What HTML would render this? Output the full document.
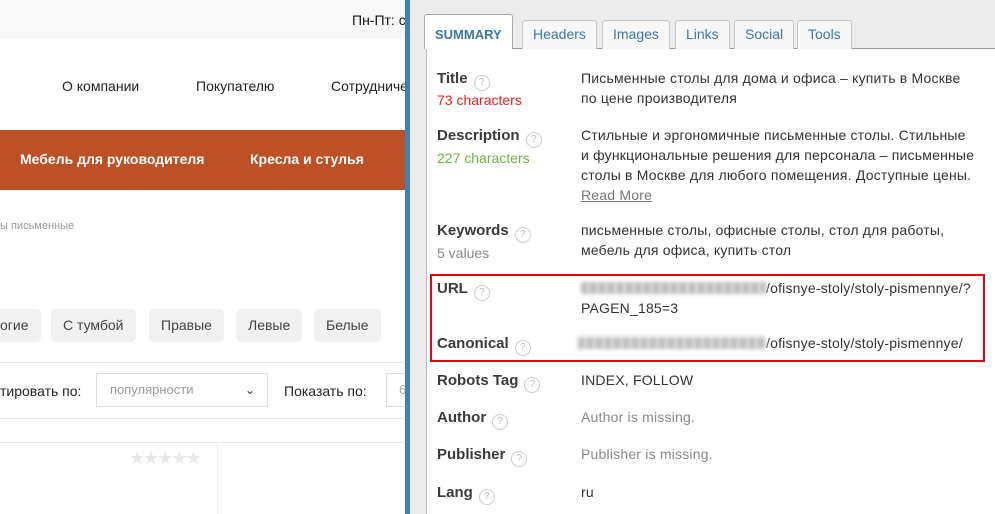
<!DOCTYPE html>
<html><head><meta charset="utf-8"><style>
*{margin:0;padding:0;box-sizing:border-box}
body{width:995px;height:514px;overflow:hidden;position:relative;background:#fff;font-family:"Liberation Sans",sans-serif}
.a{position:absolute;white-space:nowrap}
.left{position:absolute;left:0;top:0;width:405px;height:514px;overflow:hidden}
.top{left:0;top:0;width:405px;height:39px;background:#f8f8f8}
.nav{font-size:14px;color:#222;top:78px}
.org{left:0;top:130px;width:405px;height:60px;background:#bd5026}
.orgt{color:#fff;font-size:14px;font-weight:bold;top:151px}
.chip{top:309px;height:33px;background:#f1f1f1;border-radius:5px;font-size:14px;color:#444;line-height:33px;padding:0 12px}
.line{height:1px;background:#e6e6e6}
.bar{left:405px;top:0;width:5px;height:514px;background:#3b84ad}
.gp{left:410px;top:0;width:585px;height:514px;background:#ececec}
.wc{left:426px;top:48px;width:569px;height:466px;background:#fff;border-left:1px solid #bbb;border-top:1px solid #999}
.tab{top:20px;height:29px;border:1px solid #c6c6c6;border-bottom:none;background:#f7f7f7;color:#3b7aa0;font-size:14px;line-height:27px;padding:0 10px;border-radius:3px 3px 0 0}
.lab{left:437px;font-size:15px;font-weight:bold;color:#3a3a3a}
.q{display:inline-block;width:16px;height:16px;border:1px solid #ccc;border-radius:50%;color:#bbb;font-size:10px;line-height:14px;text-align:center;font-weight:normal;vertical-align:-2px;margin-left:6px}
.sub{left:437px;font-size:14px}
.val{left:581px;font-size:14px;color:#333;line-height:20px;letter-spacing:0.2px}
.blur{display:inline-block;width:185px;height:12px;background:repeating-linear-gradient(90deg,#bbb 0 6px,#ddd 6px 9px);filter:blur(2px);vertical-align:-1px}
</style></head><body>
<div class="left">
<div class="a top"></div>
<div class="a" style="left:352px;top:12px;font-size:14px;color:#111">Пн-Пт: с</div>
<div class="a nav" style="left:62px">О компании</div>
<div class="a nav" style="left:196px">Покупателю</div>
<div class="a nav" style="left:331px">Сотрудничество</div>
<div class="a org"></div>
<div class="a orgt" style="left:20px">Мебель для руководителя</div>
<div class="a orgt" style="left:250px">Кресла и стулья</div>
<div class="a" style="left:0;top:220px;font-size:11px;color:#999">ы письменные</div>
<div class="a chip" style="left:-20px;width:61px;padding-left:20px">огие</div>
<div class="a chip" style="left:51px">С тумбой</div>
<div class="a chip" style="left:149px">Правые</div>
<div class="a chip" style="left:236px">Левые</div>
<div class="a chip" style="left:314px">Белые</div>
<div class="a line" style="left:0;top:362px;width:405px"></div>
<div class="a" style="left:0;top:383px;font-size:14px;color:#222">тировать по:</div>
<div class="a" style="left:96px;top:373px;width:172px;height:34px;border:1px solid #ddd;font-size:13px;color:#999;line-height:32px;padding-left:13px">популярности<span style="position:absolute;right:12px;color:#333;font-size:12px">&#8964;</span></div>
<div class="a" style="left:284px;top:383px;font-size:14px;color:#222">Показать по:</div>
<div class="a" style="left:386px;top:373px;width:30px;height:34px;border:1px solid #ddd;font-size:13px;color:#aaa;line-height:32px;padding-left:12px">6</div>
<div class="a line" style="left:0;top:418px;width:405px"></div>
<div class="a line" style="left:0;top:442px;width:405px"></div>
<div class="a" style="left:217px;top:442px;width:1px;height:72px;background:#eee"></div>
<div class="a" style="left:129px;top:448px;font-size:18px;color:#e8e8e8;letter-spacing:-2px">★★★★★</div>
</div>
<div class="a bar"></div>
<div class="a gp"></div>
<div class="a wc"></div>
<div class="a tab" style="left:424px;top:14px;height:35px;background:#fff;color:#3b7aa0;font-weight:bold;font-size:13px;line-height:40px;border-color:#aaa;z-index:2">SUMMARY</div>
<div class="a tab" style="left:522px">Headers</div>
<div class="a tab" style="left:602px">Images</div>
<div class="a tab" style="left:675px">Links</div>
<div class="a tab" style="left:734px">Social</div>
<div class="a tab" style="left:797px">Tools</div>
<div class="a lab" style="top:70px">Title<span class="q">?</span></div>
<div class="a sub" style="top:92px;color:#e8201f">73 characters</div>
<div class="a val" style="top:68px">Письменные столы для дома и офиса – купить в Москве<br>по цене производителя</div>
<div class="a lab" style="top:127px">Description<span class="q">?</span></div>
<div class="a sub" style="top:150px;color:#6cb33f">227 characters</div>
<div class="a val" style="top:125px">Стильные и эргономичные письменные столы. Стильные<br>и функциональные решения для персонала – письменные<br>столы в Москве для любого помещения. Доступные цены.<br><span style="color:#777;text-decoration:underline">Read More</span></div>
<div class="a lab" style="top:222px">Keywords<span class="q">?</span></div>
<div class="a sub" style="top:245px;color:#888">5 values</div>
<div class="a val" style="top:220px">письменные столы, офисные столы, стол для работы,<br>мебель для офиса, купить стол</div>
<div class="a" style="left:430px;top:274px;width:555px;height:88px;border:2px solid #e8000a"></div>
<div class="a lab" style="top:280px">URL<span class="q">?</span></div>
<div class="a val" style="top:278px"><span class="blur"></span>/ofisnye-stoly/stoly-pismennye/?<br>PAGEN_185=3</div>
<div class="a lab" style="top:335px">Canonical<span class="q">?</span></div>
<div class="a val" style="left:578px;top:333px"><span class="blur" style="width:188px"></span>/ofisnye-stoly/stoly-pismennye/</div>
<div class="a lab" style="top:372px">Robots Tag<span class="q">?</span></div>
<div class="a val" style="top:370px">INDEX, FOLLOW</div>
<div class="a lab" style="top:409px">Author<span class="q">?</span></div>
<div class="a val" style="top:407px;color:#888">Author is missing.</div>
<div class="a lab" style="top:446px">Publisher<span class="q">?</span></div>
<div class="a val" style="top:444px;color:#888">Publisher is missing.</div>
<div class="a lab" style="top:484px">Lang<span class="q">?</span></div>
<div class="a val" style="top:482px">ru</div>
</body></html>
